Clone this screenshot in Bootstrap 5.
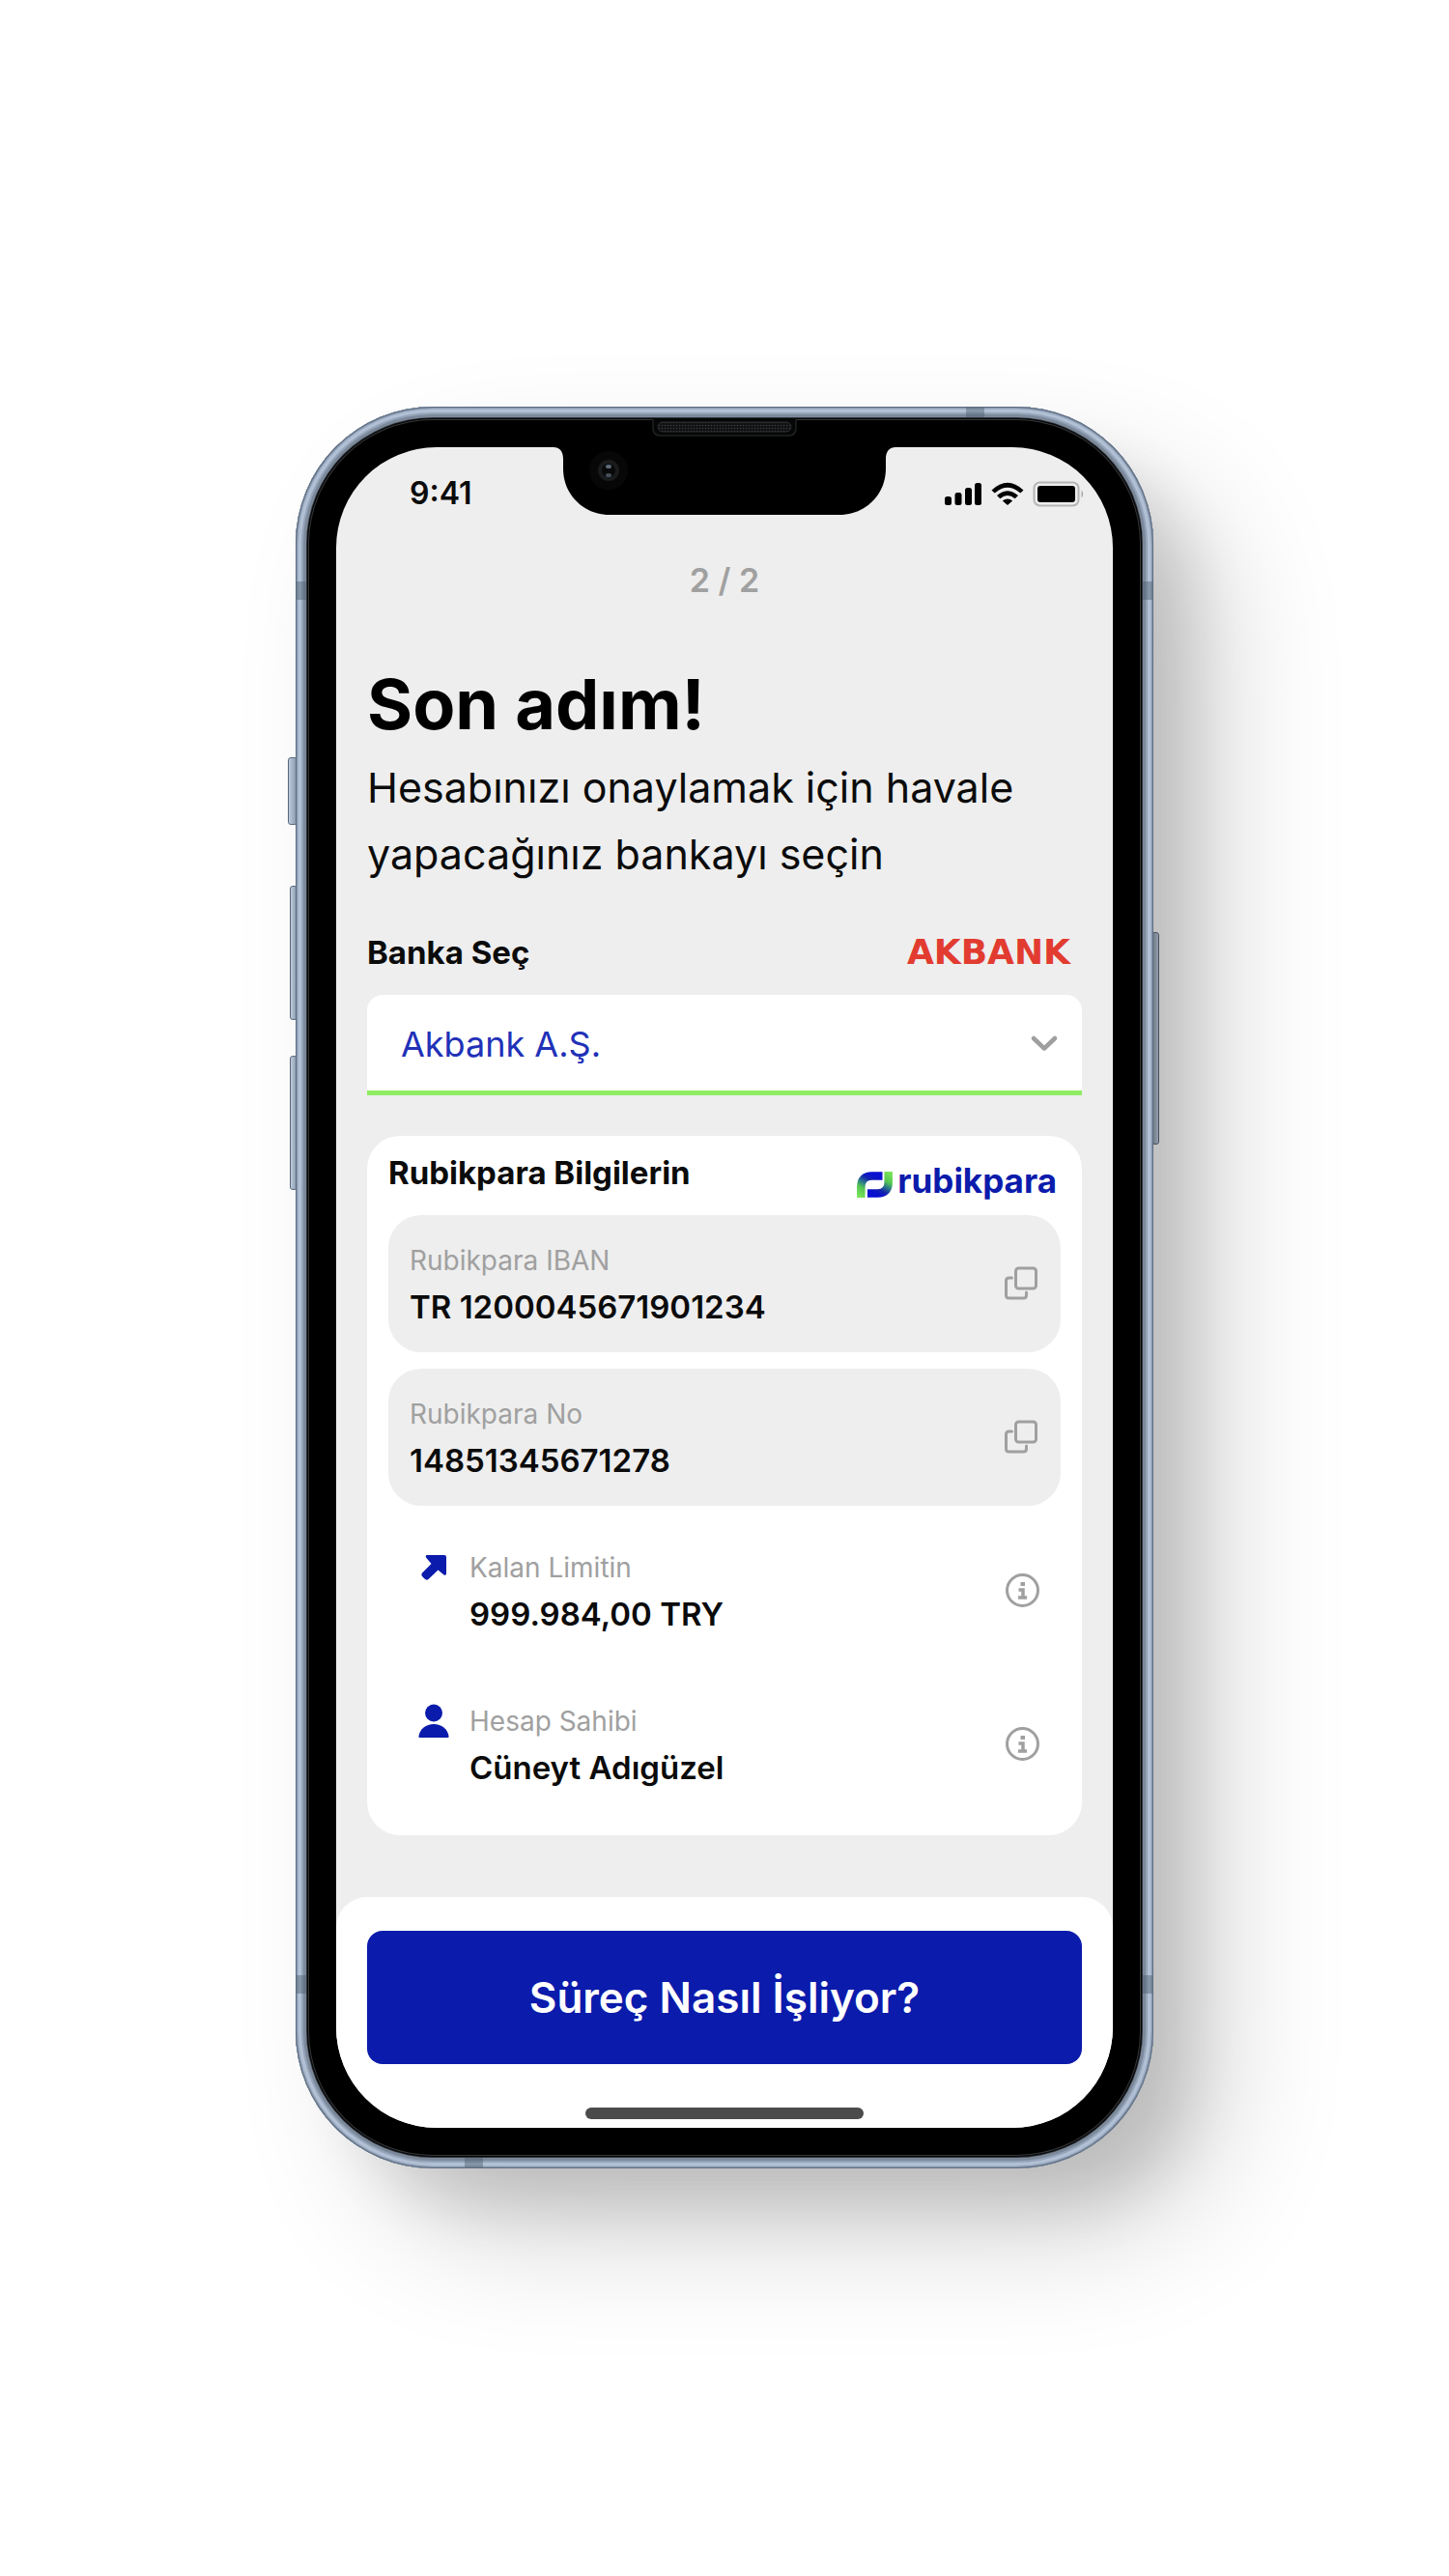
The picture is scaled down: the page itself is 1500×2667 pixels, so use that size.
<!DOCTYPE html>
<html lang="tr">
<head>
<meta charset="utf-8">
<meta name="viewport" content="width=device-width, initial-scale=1">
<title>Rubikpara – Son adım</title>
<link rel="stylesheet" href="https://cdn.jsdelivr.net/npm/bootstrap@5.3.0/dist/css/bootstrap.min.css">
<style>
  :root { --brand: #0b1bab; --surface: #eeeeee; --muted: #a0a0a0; --edge: #5f6e82; }
  body { font-family: Inter, "Noto Sans", sans-serif; color: #0b0b0b; background: #fff; }

  /* Device */
  .stage { padding: 421px 16px; }
  .phone { max-width: 888px; }
  .device {
    padding: 12px; border-radius: 142px; background: #000;
    box-shadow: 50px 50px 60px -10px rgba(0,0,0,.11), 70px 70px 140px -12px rgba(0,0,0,.2),
      inset 0 0 0 1px var(--edge), inset 0 0 0 2px #8898ad, inset 0 0 0 3px #a3b2c7, inset 0 0 0 6px #b2c0d5,
      inset 0 0 0 8px #95a4b8, inset 0 0 0 11px #7c899b, inset 0 0 0 12px #30353b;
  }
  .bezel { padding: 30px; border-radius: 130px; background: #000; box-shadow: inset 0 0 0 1px #050505, inset 0 0 0 2px #34373b; }
  .display { border-radius: 104px; background: var(--surface); overflow: hidden; }
  .key { position: absolute; width: 8px; border: 1px solid #5b6a7e; background: linear-gradient(90deg, #c3d0e2, #8c9bb0); border-radius: 3px; z-index: -1; }
  .key-l { left: -6px; } .key-l-wide { left: -8px; width: 10px; } .key-r { right: -6px; background: linear-gradient(90deg, #8c9bb0, #c3d0e2); }
  .key-mute { top: 363px; height: 70px; }
  .key-up { top: 496px; height: 139px; }
  .key-down { top: 672px; height: 139px; }
  .key-power { top: 544px; height: 220px; }
  .band { position: absolute; background: rgba(72,88,106,.42); }
  .band-v { width: 10px; height: 19px; } .band-h { width: 19px; height: 10px; }
  .band-left { left: 1px; } .band-right { right: 1px; }
  .band-upper { top: 181px; } .band-lower { bottom: 181px; }
  .band-top { top: 1px; right: 175px; } .band-bottom { bottom: 1px; left: 175px; }
  .notch { position: absolute; top: 12px; left: 50%; margin-left: -177px; }

  /* Screen */
  .status { height: 96px; padding: 0 30px 0 76px; }
  .clock { font-size: 32px; line-height: 40px; font-weight: 600; }
  .step { margin: 22px 0 68px; font-size: 34px; line-height: 40px; font-weight: 600; color: var(--muted); }
  .content { padding: 0 32px; }
  .headline { margin: 0 0 12px; font-size: 72px; line-height: 80px; font-weight: 700; color: #000; }
  .intro { margin: 0 0 47px; font-size: 43px; line-height: 69px; }
  .strong-line { font-size: 33px; line-height: 40px; font-weight: 700; }
  .akbank { font-family: "DejaVu Sans", sans-serif; font-size: 36px; line-height: 40px; font-weight: 700; color: #e23b30; padding-right: 12px; }
  .bank-select {
    height: 104px; padding: 2px 80px 0 35px; border: 0; border-bottom: 5px solid #90ed63; border-radius: 16px 16px 0 0;
    background: #fff; color: #2131b8; font-size: 36px; appearance: none;
  }
  .chevron { position: absolute; right: 24px; top: 42px; pointer-events: none; }
  .panel { margin-top: 42px; padding: 0 22px 23px; border-radius: 34px; background: #fff; }
  .panel-head { height: 82px; padding-top: 18px; }
  .wordmark { font-size: 35px; line-height: 40px; font-weight: 700; color: var(--brand); }
  .rows { gap: 17px; }
  .info-row { padding: 23px 22px; border-radius: 34px; }
  .filled { background: var(--surface); }
  .row-label { font-size: 28px; line-height: 48px; color: var(--muted); }
  .row-value { font-size: 33px; line-height: 48px; font-weight: 600; }
  .lead-icon { width: 50px; height: 48px; margin-right: 12px; }
  .icon-btn { padding: 0; border: 0; background: none; color: var(--muted); }
  .sheet { margin-top: 64px; padding: 35px 32px 9px; border-radius: 32px 32px 0 0; background: #fff; }
  .cta, .cta:hover { height: 138px; border: 0; border-radius: 16px; background: var(--brand); color: #fff; font-size: 44px; font-weight: 600; }
  .home-bar { width: 288px; max-width: 60%; height: 12px; margin: 45px auto 0; border-radius: 6px; background: #4b4b4b; }
</style>
<script src="https://cdn.jsdelivr.net/npm/bootstrap@5.3.0/dist/js/bootstrap.bundle.min.js"></script>
</head>
<body>
<div class="stage">
  <div class="phone position-relative z-0 mx-auto">
    <span class="key key-l-wide key-mute"></span>
    <span class="key key-l key-up"></span>
    <span class="key key-l key-down"></span>
    <span class="key key-r key-power"></span>

    <div class="device position-relative">
      <div class="bezel">
        <div class="display">
          <header class="status d-flex align-items-center justify-content-between">
            <span class="clock">9:41</span>
            <svg width="146" height="28" viewBox="0 0 146 28" aria-hidden="true">
              <rect x="2" y="17" width="7" height="9" rx="2.5"/><rect x="12.500" y="13" width="7" height="13" rx="2.500"/><rect x="23" y="8" width="7" height="18" rx="2.500"/><rect x="33" y="3" width="7" height="23" rx="2.500"/>
              <path d="M50.500 10.500Q67 -5 83.500 10.500L80.300 13.600Q67 2 53.700 13.600ZM56 16Q67 6.500 78 16L74.700 19.200Q67 13 59.300 19.200ZM61.800 21.500Q67 17.600 72.200 21.500L67 26Z"/>
              <rect x="94.500" y="2.500" width="46" height="24" rx="6" fill="none" stroke="#b5b5b5" stroke-width="2"/>
              <rect x="98" y="6" width="39" height="17" rx="3"/>
              <path d="M143.500 10.500Q147 14.500 143.500 18.500Z" fill="#a8a8a8"/>
            </svg>
          </header>
          <p class="step text-center">2 / 2</p>

          <main class="content">
            <h1 class="headline">Son adım!</h1>
            <p class="intro">Hesabınızı onaylamak için havale yapacağınız bankayı seçin</p>

            <div class="d-flex justify-content-between align-items-center mb-4">
              <label class="strong-line" for="bank">Banka Seç</label>
              <span class="akbank">AKBANK</span>
            </div>
            <div class="position-relative">
              <select class="bank-select d-block w-100" id="bank"><option>Akbank A.Ş.</option></select>
              <svg class="chevron" width="30" height="18" viewBox="0 0 30 18" fill="none" stroke="#9f9f9f" stroke-width="4.500" stroke-linecap="round" stroke-linejoin="round"><path d="M4 3l11 10.500L26 3"/></svg>
            </div>

            <section class="panel">
              <div class="panel-head d-flex justify-content-between align-items-start">
                <h2 class="strong-line m-0">Rubikpara Bilgilerin</h2>
                <div class="d-flex align-items-center mt-2 me-1">
                  <svg class="me-1" width="38" height="36" viewBox="0 0 38 36" fill="none" stroke-width="8.500">
                    <defs>
                      <linearGradient id="ga" gradientUnits="userSpaceOnUse" x1="4" y1="36" x2="17" y2="13"><stop offset="0" stop-color="#7be35c"/><stop offset=".36" stop-color="#55c752"/><stop offset=".56" stop-color="#2f7f86"/><stop offset=".8" stop-color="#1422b0"/><stop offset="1" stop-color="#0a10cf"/></linearGradient>
                      <linearGradient id="gb" gradientUnits="userSpaceOnUse" x1="33" y1="9" x2="20" y2="32"><stop offset="0" stop-color="#7be35c"/><stop offset=".36" stop-color="#55c752"/><stop offset=".56" stop-color="#2f7f86"/><stop offset=".8" stop-color="#1422b0"/><stop offset="1" stop-color="#0a10cf"/></linearGradient>
                    </defs>
                    <path stroke="url(#ga)" d="M4.300 36V25C4.300 17 8.500 13.500 15.500 13.500H26.500"/>
                    <path stroke="url(#gb)" d="M32.700 9V20C32.700 28 28.500 31.500 21.500 31.500H11"/>
                  </svg>
                  <span class="wordmark">rubikpara</span>
                </div>
              </div>

              <div class="rows d-flex flex-column">
                <div class="info-row filled d-flex align-items-center">
                  <div class="flex-grow-1"><div class="row-label">Rubikpara IBAN</div><div class="row-value">TR 1200045671901234</div></div>
                  <button class="icon-btn d-flex" type="button" aria-label="IBAN kopyala"><svg width="36" height="36" viewBox="0 0 36 36" fill="none" stroke="currentColor" stroke-width="3" stroke-linecap="round"><rect x="11.500" y="2" width="21" height="21" rx="3"/><path d="M7.500 12H4.500Q1.500 12 1.500 15V30Q1.500 33 4.500 33H19.500Q22.500 33 22.500 30V27"/></svg></button>
                </div>
                <div class="info-row filled d-flex align-items-center">
                  <div class="flex-grow-1"><div class="row-label">Rubikpara No</div><div class="row-value">14851345671278</div></div>
                  <button class="icon-btn d-flex" type="button" aria-label="No kopyala"><svg width="36" height="36" viewBox="0 0 36 36" fill="none" stroke="currentColor" stroke-width="3" stroke-linecap="round"><rect x="11.500" y="2" width="21" height="21" rx="3"/><path d="M7.500 12H4.500Q1.500 12 1.500 15V30Q1.500 33 4.500 33H19.500Q22.500 33 22.500 30V27"/></svg></button>
                </div>
                <div class="info-row d-flex align-items-center">
                  <div class="lead-icon d-flex align-items-center justify-content-center align-self-start"><svg width="28" height="28" viewBox="0 0 28 28" fill="#0b1bab"><path d="M7 1H25Q27 1 27 3V20.500Q26.500 22.500 24.500 21.500L18.500 16.500L8.500 26Q6.500 27.500 4.500 25.500L2 23Q.5 21 2 19.500L11.500 10L6 3.500Q5 1.500 7 1Z"/></svg></div>
                  <div class="flex-grow-1"><div class="row-label">Kalan Limitin</div><div class="row-value">999.984,00 TRY</div></div>
                  <button class="icon-btn d-flex" type="button" aria-label="Limit bilgisi"><svg width="36" height="36" viewBox="0 0 36 36" fill="none" stroke="currentColor" stroke-width="3"><circle cx="18.500" cy="17.500" r="16"/><path d="M14.500 17H19V24.500M14 25H23" stroke-width="3.500"/><path d="M16.500 9H21V13H16.500Z" fill="currentColor" stroke="none"/></svg></button>
                </div>
                <div class="info-row d-flex align-items-center">
                  <div class="lead-icon d-flex align-items-center justify-content-center align-self-start"><svg width="32" height="36" viewBox="0 0 32 36" fill="#0b1bab"><circle cx="16" cy="9.500" r="9"/><path d="M1 35Q.5 35 .5 33.500C1.500 26 8 21 16 21S30.500 26 31.500 33.500Q31.500 35 31 35Z"/></svg></div>
                  <div class="flex-grow-1"><div class="row-label">Hesap Sahibi</div><div class="row-value">Cüneyt Adıgüzel</div></div>
                  <button class="icon-btn d-flex" type="button" aria-label="Hesap sahibi bilgisi"><svg width="36" height="36" viewBox="0 0 36 36" fill="none" stroke="currentColor" stroke-width="3"><circle cx="18.500" cy="17.500" r="16"/><path d="M14.500 17H19V24.500M14 25H23" stroke-width="3.500"/><path d="M16.500 9H21V13H16.500Z" fill="currentColor" stroke="none"/></svg></button>
                </div>
              </div>
            </section>
          </main>

          <footer class="sheet">
            <button class="cta btn w-100" type="button">Süreç Nasıl İşliyor?</button>
            <div class="home-bar"></div>
          </footer>
        </div>
      </div>

      <!-- Antenna bands -->
      <span class="band band-v band-left band-upper"></span>
      <span class="band band-v band-right band-upper"></span>
      <span class="band band-v band-left band-lower"></span>
      <span class="band band-v band-right band-lower"></span>
      <span class="band band-h band-top"></span>
      <span class="band band-h band-bottom"></span>

      <!-- Speaker, notch and camera -->
      <svg class="notch" width="354" height="100" viewBox="0 0 354 100" aria-hidden="true">
        <defs><pattern id="mesh" width="3" height="3" patternUnits="userSpaceOnUse"><rect width="3" height="3" fill="#101112"/><circle cx="1.500" cy="1.500" r=".8" fill="#3a3c3d"/></pattern></defs>
        <path d="M0 30C6 30 10 34 10 42V52C10 80 32 100 58 100H296C322 100 344 80 344 52V42C344 34 348 30 354 30V22H0Z"/>
        <path d="M103 1V10Q103 18 111 18H243Q251 18 251 10V1" fill="#050606" stroke="#1f2122" stroke-width="1.500"/>
        <rect x="108" y="4" width="138" height="10" rx="5" fill="url(#mesh)" stroke="#2a2c2c"/>
        <circle cx="57" cy="54" r="20" fill="#070707"/><circle cx="57" cy="54" r="11" fill="#1a1b1d"/><circle cx="57" cy="54" r="7" fill="#08090a"/>
        <ellipse cx="57" cy="50" rx="3" ry="2" fill="#5d6b78"/><ellipse cx="57" cy="59" rx="3" ry="2" fill="#47505c"/>
      </svg>
    </div>
  </div>
</div>
</body>
</html>
